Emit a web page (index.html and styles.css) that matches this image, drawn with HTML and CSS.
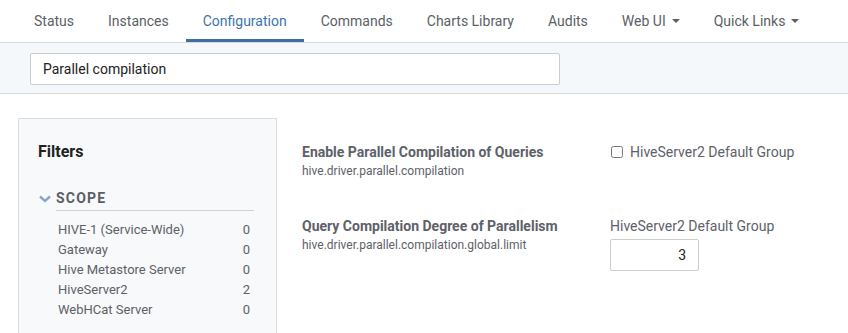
FILE: index.html
```html
<html lang="en">

<head>
    <meta charset="UTF-8">
    <meta name="viewport" content="width=device-width, initial-scale=1.0">
    <title>Configuration</title>
    <link rel="stylesheet" href="styles.css">
</head>

<body>
    <ul class="tabs">
        <li><a href="#">Status</a></li>
        <li><a href="#">Instances</a></li>
        <li class="active"><a href="#">Configuration</a></li>
        <li><a href="#">Commands</a></li>
        <li><a href="#">Charts Library</a></li>
        <li><a href="#">Audits</a></li>
        <li><a href="#">Web UI <span class="caret"></span></a></li>
        <li><a href="#">Quick Links <span class="caret"></span></a></li>
    </ul>

    <div class="searchbar">
        <input type="text" class="search" value="Parallel compilation">
    </div>

    <div class="content">
        <div class="filters">
            <h3>Filters</h3>
            <div class="scope-head">
                <svg class="chevron" width="12" height="8" viewBox="0 0 12 8">
                    <path d="M1 1.5 L6 6 L11 1.5" fill="none" stroke="#86a5c8" stroke-width="2.4"/>
                </svg>
                <span>SCOPE</span>
            </div>
            <ul class="scope-list">
                <li><span>HIVE-1 (Service-Wide)</span><span>0</span></li>
                <li><span>Gateway</span><span>0</span></li>
                <li><span>Hive Metastore Server</span><span>0</span></li>
                <li><span>HiveServer2</span><span>2</span></li>
                <li><span>WebHCat Server</span><span>0</span></li>
            </ul>
        </div>

        <div class="props">
            <div class="prop">
                <div class="prop-name">
                    <div class="title">Enable Parallel Compilation of Queries</div>
                    <div class="key">hive.driver.parallel.compilation</div>
                </div>
                <div class="prop-value">
                    <label class="check"><input type="checkbox"> HiveServer2 Default Group</label>
                </div>
            </div>
            <div class="prop">
                <div class="prop-name">
                    <div class="title">Query Compilation Degree of Parallelism</div>
                    <div class="key">hive.driver.parallel.compilation.global.limit</div>
                </div>
                <div class="prop-value">
                    <div class="group">HiveServer2 Default Group</div>
                    <input type="text" class="num" value="3">
                </div>
            </div>
        </div>
    </div>
</body>

</html>
```

FILE: styles.css
```css
body {
    font-family: Roboto, 'Liberation Sans', sans-serif;
    margin: 0;
    background: #fff;
    color: #5d6168;
}

.tabs {
    list-style: none;
    margin: 0;
    padding: 0 0 0 17px;
    display: flex;
    height: 42px;
    border-bottom: 1px solid #d6d9de;
}

.tabs li {
    display: flex;
}

.tabs a {
    display: flex;
    align-items: center;
    padding: 2px 17px 0;
    font-size: 14px;
    color: #5a5f66;
    text-decoration: none;
    border-bottom: 3px solid transparent;
}

.tabs li.active a {
    color: #3c74ad;
    border-bottom-color: #3c6ea5;
}

.caret {
    display: inline-block;
    width: 0;
    height: 0;
    margin-left: 6px;
    border-left: 4px solid transparent;
    border-right: 4px solid transparent;
    border-top: 4px solid #5a5f66;
    vertical-align: middle;
}

.searchbar {
    background: #f5f8fb;
    border-bottom: 1px solid #d6d9de;
    padding: 10px 30px 8px;
}

.search {
    width: 530px;
    height: 32px;
    box-sizing: border-box;
    border: 1px solid #ccc;
    border-radius: 2px;
    padding: 0 12px;
    font-family: inherit;
    font-size: 14px;
    color: #222;
    background: #fff;
}

.content {
    display: flex;
    padding: 24px 0 0 18px;
}

.filters {
    width: 259px;
    box-sizing: border-box;
    height: 230px;
    background: #f8f9fb;
    border: 1px solid #d9dbde;
    border-bottom: none;
    padding: 23px 22px 0 19px;
}

.filters h3 {
    margin: 0 0 29px;
    font-size: 16px;
    font-weight: 700;
    color: #222;
}

.scope-head {
    display: flex;
    align-items: flex-start;
}

.chevron {
    margin: 5px 5px 0 1px;
}

.scope-head span {
    flex: 1;
    font-size: 14px;
    line-height: 16px;
    font-weight: 700;
    letter-spacing: 1.2px;
    color: #5a5f66;
    padding: 0 0 4px 0;
    border-bottom: 1px solid #cfd3d8;
}

.scope-list {
    list-style: none;
    margin: 9px 0 0 0;
    padding: 0 4px 0 20px;
}

.scope-list li {
    display: flex;
    justify-content: space-between;
    font-size: 13px;
    line-height: 20px;
    color: #5d6168;
}

.props {
    padding: 25px 0 0 25px;
}

.prop {
    display: flex;
    margin-bottom: 38px;
}

.prop-name {
    width: 308px;
}

.title {
    font-size: 14px;
    font-weight: 700;
    color: #5d6168;
    line-height: 18px;
}

.key {
    font-size: 12px;
    color: #5d6168;
    line-height: 16px;
    margin-top: 2px;
}

.check {
    display: flex;
    align-items: center;
    font-size: 14px;
    line-height: 18px;
    color: #5d6168;
}

.check input {
    width: 12px;
    height: 12px;
    margin: 0 7px 0 1px;
}

.group {
    font-size: 14px;
    line-height: 18px;
    margin-bottom: 4px;
}

.num {
    width: 89px;
    height: 32px;
    box-sizing: border-box;
    border: 1px solid #ccc;
    border-radius: 2px;
    text-align: right;
    padding: 0 12px;
    font-family: inherit;
    font-size: 14px;
    color: #222;
}
```
